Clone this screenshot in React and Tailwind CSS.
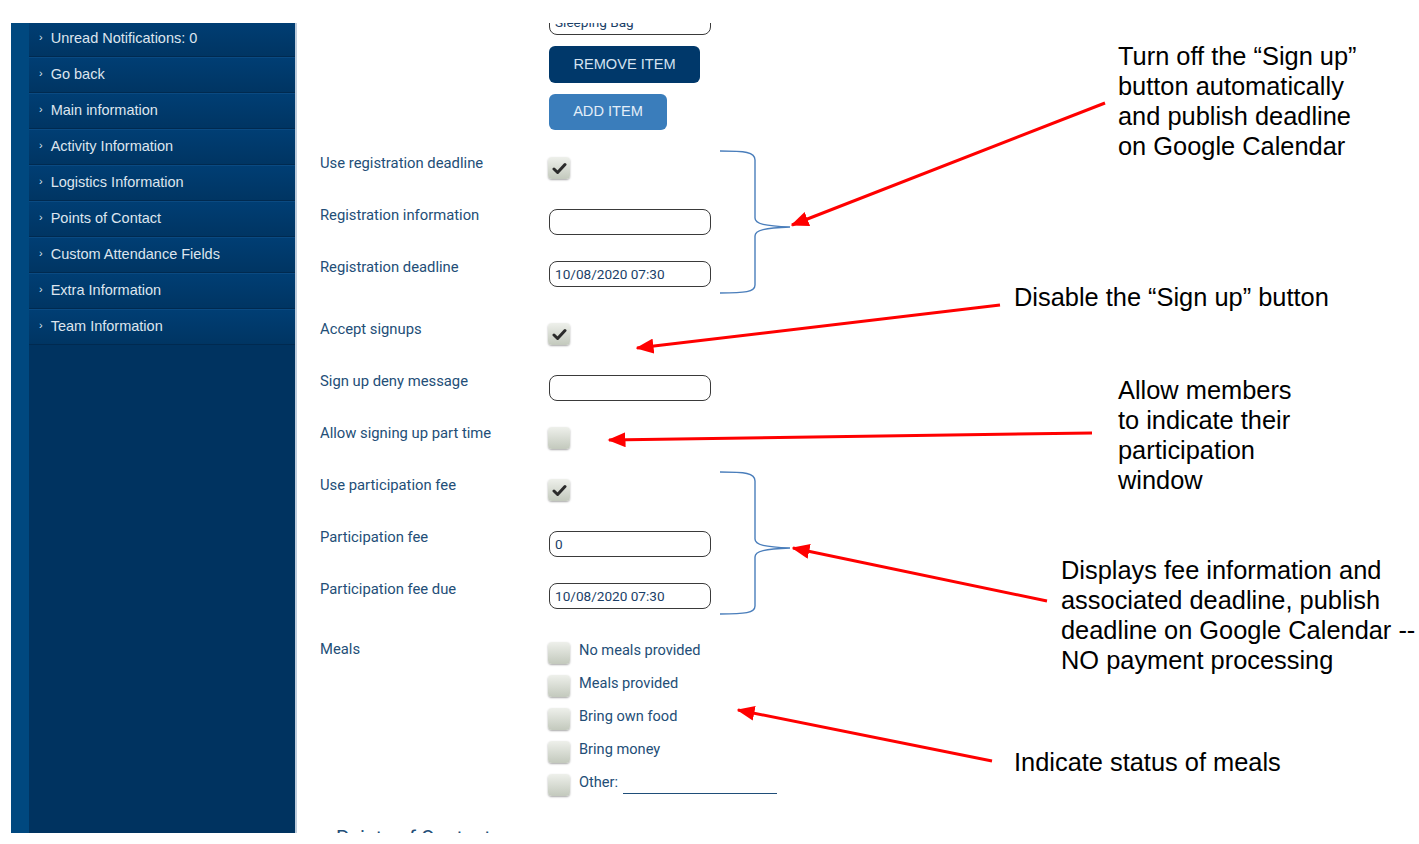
import React from "react";

const menuItems = [
  "Unread Notifications: 0",
  "Go back",
  "Main information",
  "Activity Information",
  "Logistics Information",
  "Points of Contact",
  "Custom Attendance Fields",
  "Extra Information",
  "Team Information",
];

const mealOptions = ["No meals provided", "Meals provided", "Bring own food", "Bring money"];

const Checkbox = ({ checked }) => (
  <div className="w-[22px] h-[22px] -ml-[1px] rounded-[4px] bg-linear-to-b from-[#eef0eb] to-[#c3c9bd] shadow-[0_1px_2px_rgba(0,0,0,0.35)] flex items-center justify-center">
    {checked && (
      <svg width="15" height="13" viewBox="0 0 15 13">
        <path d="M2 7 L5.6 10.5 L13 2.5" fill="none" stroke="#2b2b2b" strokeWidth="3" strokeLinecap="round" strokeLinejoin="round" />
      </svg>
    )}
  </div>
);

const TextInput = ({ value }) => (
  <div className="w-[162px] h-[26px] rounded-[8px] border border-[#3a3a3a] bg-white flex items-center px-[5px] text-[13.6px] text-[#1b3f68]">
    {value}
  </div>
);

const Row = ({ label, children, className = "h-[52px]" }) => (
  <div className={`flex items-start ${className}`}>
    <div className="w-[229px] shrink-0 text-[14.8px] leading-[20px] text-[#234e77]">{label}</div>
    <div className="mt-[4px]">{children}</div>
  </div>
);

const Arrow = ({ x1, y1, x2, y2 }) => (
  <line x1={x1} y1={y1} x2={x2} y2={y2} stroke="#ff0000" strokeWidth="3" markerEnd="url(#ah)" />
);

const App = () => {
  return (
    <div className="relative w-[1419px] h-[844px] bg-white overflow-hidden font-['Liberation_Sans',Arial,sans-serif]">
      <div className="mt-[23px] ml-[11px] h-[810px] flex overflow-hidden">
        {/* Sidebar */}
        <div className="w-[286px] shrink-0 flex border-r-2 border-[#bfcddc]">
          <div className="w-[18px] bg-[#00487f]" />
          <div className="flex-1 bg-[#003360]">
            <div className="-mt-[2px]">
              {menuItems.map((item) => (
                <div
                  key={item}
                  className="h-[36px] flex items-center pl-[10px] bg-linear-to-b from-[#003e74] to-[#003563] border-t border-[#0a4a82] border-b border-b-[#002a50] text-[14.5px] text-[#dde5ee]"
                >
                  <span className="text-[11px] mr-[8px] -mt-[3px]">›</span>
                  {item}
                </div>
              ))}
            </div>
          </div>
        </div>

        {/* Form content */}
        <div className="flex-1 pl-[23px] font-['Roboto',sans-serif]">
          <Row label="Required equipment" className="h-[30px] -mt-[18px]">
            <TextInput value="Sleeping Bag" />
          </Row>
          <div className="ml-[229px] mt-[11px] w-[151px] h-[37px] rounded-[6px] bg-[#00386a] flex items-center justify-center text-[14.6px] text-[#d5e3f0] font-['Liberation_Sans',Arial,sans-serif]">
            REMOVE ITEM
          </div>
          <div className="ml-[229px] mt-[11px] w-[118px] h-[36px] rounded-[6px] bg-[#3a7dbb] flex items-center justify-center text-[14.6px] text-[#e3eef8] font-['Liberation_Sans',Arial,sans-serif]">
            ADD ITEM
          </div>

          <div className="mt-[23px]">
            <Row label="Use registration deadline">
              <Checkbox checked />
            </Row>
            <Row label="Registration information">
              <TextInput value="" />
            </Row>
            <Row label="Registration deadline" className="h-[62px]">
              <TextInput value="10/08/2020 07:30" />
            </Row>
            <Row label="Accept signups">
              <Checkbox checked />
            </Row>
            <Row label="Sign up deny message">
              <TextInput value="" />
            </Row>
            <Row label="Allow signing up part time">
              <Checkbox />
            </Row>
            <Row label="Use participation fee">
              <Checkbox checked />
            </Row>
            <Row label="Participation fee">
              <TextInput value="0" />
            </Row>
            <Row label="Participation fee due" className="h-[60px]">
              <TextInput value="10/08/2020 07:30" />
            </Row>

            <div className="flex items-start">
              <div className="w-[229px] shrink-0 text-[14.8px] leading-[20px] text-[#234e77]">Meals</div>
              <div className="mt-[3px]">
                {mealOptions.map((m) => (
                  <div key={m} className="flex items-start h-[33px]">
                    <Checkbox />
                    <span className="ml-[9px] -mt-[2px] text-[14.6px] leading-[20px] text-[#234e77]">{m}</span>
                  </div>
                ))}
                <div className="flex items-start h-[33px]">
                  <Checkbox />
                  <span className="ml-[9px] -mt-[2px] text-[14.6px] leading-[20px] text-[#234e77]">Other:</span>
                  <div className="ml-[5px] w-[154px] h-[20px] border-b border-[#1f4e79]" />
                </div>
              </div>
            </div>

            <div className="mt-[19px] pl-[16px] text-[20px] leading-[24px] text-[#234e77]">Points of Contact</div>
          </div>
        </div>
      </div>

      {/* Annotation drawings */}
      <svg className="absolute inset-0 pointer-events-none" width="1419" height="844">
        <defs>
          <marker id="ah" markerWidth="6" markerHeight="5" refX="5.5" refY="2.5" orient="auto" markerUnits="strokeWidth">
            <path d="M0,0 L6,2.5 L0,5 z" fill="#ff0000" />
          </marker>
        </defs>
        <path
          d="M720,151 C745,151 755,152 755,160 L755,218 C755,224 765,226 790,227 C765,228 755,230 755,236 L755,285 C755,292 745,293 720,293"
          fill="none"
          stroke="#4a7ebb"
          strokeWidth="1.4"
        />
        <path
          d="M720,472 C745,472 755,473 755,481 L755,539 C755,545 765,547 790,548 C765,549 755,551 755,557 L755,606 C755,613 745,614 720,614"
          fill="none"
          stroke="#4a7ebb"
          strokeWidth="1.4"
        />
        <Arrow x1={1105} y1={103} x2={792} y2={225} />
        <Arrow x1={1000} y1={305} x2={637} y2={348} />
        <Arrow x1={1092} y1={433} x2={609} y2={440} />
        <Arrow x1={1047} y1={601} x2={793} y2={548} />
        <Arrow x1={992} y1={761} x2={738} y2={710} />
      </svg>

      {/* Annotation texts */}
      <div className="absolute left-[1118px] top-[41px] text-[25.4px] leading-[30px] text-black whitespace-nowrap">
        <div>Turn off the “Sign up”</div>
        <div>button automatically</div>
        <div>and publish deadline</div>
        <div>on Google Calendar</div>
      </div>
      <div className="absolute left-[1014px] top-[282px] text-[25.4px] leading-[30px] text-black whitespace-nowrap">
        Disable the “Sign up” button
      </div>
      <div className="absolute left-[1118px] top-[375px] text-[25.4px] leading-[30px] text-black whitespace-nowrap">
        <div>Allow members</div>
        <div>to indicate their</div>
        <div>participation</div>
        <div>window</div>
      </div>
      <div className="absolute left-[1061px] top-[555px] text-[25.4px] leading-[30px] text-black whitespace-nowrap">
        <div>Displays fee information and</div>
        <div>associated deadline, publish</div>
        <div>deadline on Google Calendar --</div>
        <div>NO payment processing</div>
      </div>
      <div className="absolute left-[1014px] top-[747px] text-[25.4px] leading-[30px] text-black whitespace-nowrap">
        Indicate status of meals
      </div>
    </div>
  );
};

export default App;
